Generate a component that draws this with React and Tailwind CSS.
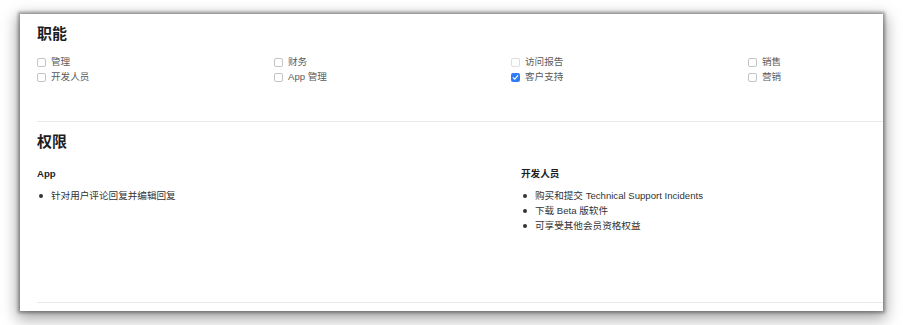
import React from 'react';

const roles = [
  { label: '管理', checked: false },
  { label: '财务', checked: false },
  { label: '访问报告', checked: false, faint: true },
  { label: '销售', checked: false },
  { label: '开发人员', checked: false },
  { label: 'App 管理', checked: false },
  { label: '客户支持', checked: true },
  { label: '营销', checked: false },
];

const permissions = [
  { title: 'App', items: ['针对用户评论回复并编辑回复'] },
  {
    title: '开发人员',
    items: ['购买和提交 Technical Support Incidents', '下载 Beta 版软件', '可享受其他会员资格权益'],
  },
];

const Checkbox = ({ checked, faint }) => {
  if (checked) {
    return (
      <span className="w-[9px] h-[9px] rounded-[2px] bg-[#2f7df6] flex items-center justify-center shrink-0">
        <svg width="7" height="7" viewBox="0 0 8 8" fill="none">
          <path d="M1.4 4.2 L3.2 6 L6.6 1.8" stroke="white" strokeWidth="1.3" strokeLinecap="round" strokeLinejoin="round" />
        </svg>
      </span>
    );
  }
  return (
    <span
      className={`w-[9px] h-[9px] rounded-[2px] bg-white border shrink-0 ${
        faint ? 'border-[#dedede]' : 'border-[#c4c4c4]'
      }`}
    />
  );
};

const App = () => {
  return (
    <div
      className="w-[903px] h-[325px] bg-white pt-[14px] pl-[20px] overflow-hidden"
      style={{ fontFamily: '"Liberation Sans", "Noto Sans CJK SC", sans-serif' }}
    >
      <div className="w-[863px] h-[297px] bg-white overflow-hidden shadow-[0_0_3px_2px_rgba(0,0,0,0.35),0_5px_14px_3px_rgba(0,0,0,0.35)]">
        <div className="w-[965px] pl-[17px] pt-[10px]">
          {/* 职能 */}
          <h2 className="text-[15px] leading-[20px] font-semibold text-[#1d1d1f]">职能</h2>
          <div className="grid grid-cols-4 mt-[11px]">
            {roles.map((r) => (
              <label key={r.label} className="flex items-center gap-[5px] h-[15px] text-[9.6px] text-[#5a5a5a]">
                <Checkbox checked={r.checked} faint={r.faint} />
                <span>{r.label}</span>
              </label>
            ))}
          </div>

          <div className="h-px bg-[#e9e9e9] mt-[36px]" />

          {/* 权限 */}
          <h2 className="text-[15px] leading-[20px] font-semibold text-[#1d1d1f] mt-[10px]">权限</h2>
          <div className="grid grid-cols-2 gap-x-5 mt-[14px]">
            {permissions.map((p) => (
              <div key={p.title}>
                <h3 className="text-[9.6px] leading-[15px] font-semibold text-[#1d1d1f]">{p.title}</h3>
                <ul className="mt-[8px]">
                  {p.items.map((it) => (
                    <li key={it} className="flex items-center h-[14.7px] text-[9.6px] text-[#333]">
                      <span className="w-[4px] h-[4px] rounded-full bg-[#333] ml-[2px] mr-[8px]" />
                      {it}
                    </li>
                  ))}
                </ul>
              </div>
            ))}
          </div>

          <div className="h-px bg-[#e9e9e9] mt-[69px]" />
        </div>
      </div>
    </div>
  );
};

export default App;
